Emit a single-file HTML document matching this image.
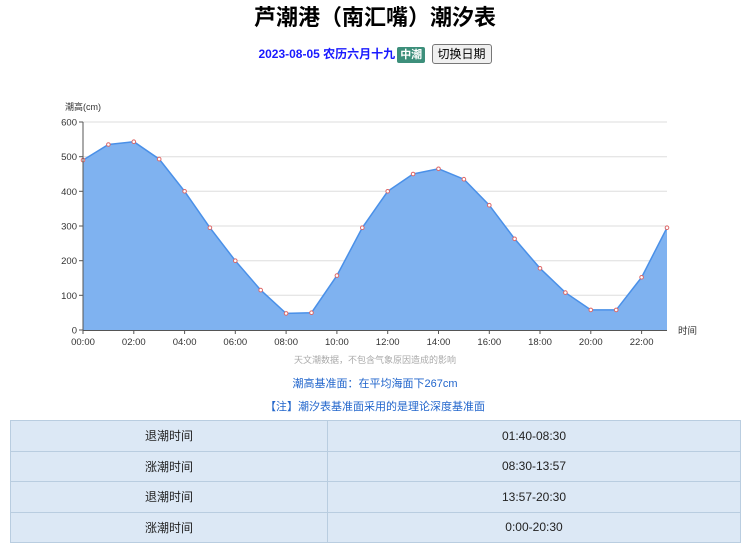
<!DOCTYPE html>
<html><head><meta charset="utf-8"><style>
body{margin:0;width:750px;height:547px;background:#fff;font-family:"Liberation Sans","Noto Sans CJK SC",sans-serif;position:relative;overflow:hidden}
h1{position:absolute;left:0;width:750px;top:4px;margin:0;text-align:center;font-size:22px;font-weight:bold;color:#000;line-height:28px}
.sub{position:absolute;left:0;width:750px;top:44px;text-align:center;font-size:12px;line-height:20px}
.sub b{color:#1a1aff}
.sub .d{color:#1a1aff;font-weight:bold}
.tag{display:inline-block;background:#3d8f7b;color:#fff;font-size:11px;padding:0 3px;line-height:16px;border-radius:2px;margin:0 3px 0 2px;font-weight:bold}
.btn{display:inline-block;border:1px solid #777;background:#f0f0f0;border-radius:3px;padding:0 5px;line-height:18px;font-size:12px;color:#000}
svg{position:absolute;left:0;top:0}
.t{position:absolute;left:0;width:750px;text-align:center;font-size:11px;color:#2266cc}
table{position:absolute;left:10px;top:420px;width:731px;border-collapse:collapse;font-size:12px;background:#dce8f5}
td{border:1px solid #b9cde0;height:29.5px;text-align:center;color:#222;padding:0}
</style></head><body>
<h1>芦潮港（南汇嘴）潮汐表</h1>
<div class="sub"><b>2023-08-05</b> <span class="d">农历六月十九</span><span class="tag">中潮</span> <span class="btn">切换日期</span></div>
<svg width="750" height="547" font-family="Liberation Sans, Noto Sans CJK SC, sans-serif">
<g stroke="#ddd" stroke-width="1">
<line x1="83" y1="122" x2="667" y2="122"/><line x1="83" y1="156.7" x2="667" y2="156.7"/><line x1="83" y1="191.3" x2="667" y2="191.3"/><line x1="83" y1="226" x2="667" y2="226"/><line x1="83" y1="260.7" x2="667" y2="260.7"/><line x1="83" y1="295.3" x2="667" y2="295.3"/>
</g>
<polygon fill="#7fb2f0" points="83,330 83,160.1 108.4,144.5 133.8,141.7 159.2,159.1 184.6,191.3 209.9,227.7 235.3,260.7 260.7,290.1 286.1,313.4 311.5,312.7 336.9,275.6 362.3,227.7 387.7,191.3 413.1,174 438.5,168.8 463.9,179.2 489.3,205.2 514.6,238.8 540,268.3 565.4,292.6 590.8,309.9 616.2,309.9 641.6,277.3 667,227.7 667,330"/>
<polyline fill="none" stroke="#4a90e8" stroke-width="1.5" points="83,160.1 108.4,144.5 133.8,141.7 159.2,159.1 184.6,191.3 209.9,227.7 235.3,260.7 260.7,290.1 286.1,313.4 311.5,312.7 336.9,275.6 362.3,227.7 387.7,191.3 413.1,174 438.5,168.8 463.9,179.2 489.3,205.2 514.6,238.8 540,268.3 565.4,292.6 590.8,309.9 616.2,309.9 641.6,277.3 667,227.7"/>
<g fill="#fff" stroke="#d66" stroke-width="1">
<circle cx="83" cy="160.1" r="1.8"/><circle cx="108.4" cy="144.5" r="1.8"/><circle cx="133.8" cy="141.7" r="1.8"/><circle cx="159.2" cy="159.1" r="1.8"/><circle cx="184.6" cy="191.3" r="1.8"/><circle cx="209.9" cy="227.7" r="1.8"/><circle cx="235.3" cy="260.7" r="1.8"/><circle cx="260.7" cy="290.1" r="1.8"/><circle cx="286.1" cy="313.4" r="1.8"/><circle cx="311.5" cy="312.7" r="1.8"/><circle cx="336.9" cy="275.6" r="1.8"/><circle cx="362.3" cy="227.7" r="1.8"/><circle cx="387.7" cy="191.3" r="1.8"/><circle cx="413.1" cy="174" r="1.8"/><circle cx="438.5" cy="168.8" r="1.8"/><circle cx="463.9" cy="179.2" r="1.8"/><circle cx="489.3" cy="205.2" r="1.8"/><circle cx="514.6" cy="238.8" r="1.8"/><circle cx="540" cy="268.3" r="1.8"/><circle cx="565.4" cy="292.6" r="1.8"/><circle cx="590.8" cy="309.9" r="1.8"/><circle cx="616.2" cy="309.9" r="1.8"/><circle cx="641.6" cy="277.3" r="1.8"/><circle cx="667" cy="227.7" r="1.8"/>
</g>
<g stroke="#555" stroke-width="1">
<line x1="83" y1="122" x2="83" y2="330"/><line x1="83" y1="330.5" x2="667" y2="330.5"/>
<line x1="79" y1="122" x2="83" y2="122"/><line x1="79" y1="156.7" x2="83" y2="156.7"/><line x1="79" y1="191.3" x2="83" y2="191.3"/><line x1="79" y1="226" x2="83" y2="226"/><line x1="79" y1="260.7" x2="83" y2="260.7"/><line x1="79" y1="295.3" x2="83" y2="295.3"/><line x1="79" y1="330" x2="83" y2="330"/>
<line x1="83" y1="330" x2="83" y2="334"/><line x1="133.8" y1="330" x2="133.8" y2="334"/><line x1="184.6" y1="330" x2="184.6" y2="334"/><line x1="235.3" y1="330" x2="235.3" y2="334"/><line x1="286.1" y1="330" x2="286.1" y2="334"/><line x1="336.9" y1="330" x2="336.9" y2="334"/><line x1="387.7" y1="330" x2="387.7" y2="334"/><line x1="438.5" y1="330" x2="438.5" y2="334"/><line x1="489.3" y1="330" x2="489.3" y2="334"/><line x1="540" y1="330" x2="540" y2="334"/><line x1="590.8" y1="330" x2="590.8" y2="334"/><line x1="641.6" y1="330" x2="641.6" y2="334"/>
</g>
<g font-size="9.5" fill="#333" text-anchor="end">
<text x="77" y="125.5">600</text><text x="77" y="160">500</text><text x="77" y="195">400</text><text x="77" y="229.5">300</text><text x="77" y="264">200</text><text x="77" y="299">100</text><text x="77" y="333.5">0</text>
</g>
<g font-size="9.5" fill="#333" text-anchor="middle">
<text x="83" y="345">00:00</text><text x="133.8" y="345">02:00</text><text x="184.6" y="345">04:00</text><text x="235.3" y="345">06:00</text><text x="286.1" y="345">08:00</text><text x="336.9" y="345">10:00</text><text x="387.7" y="345">12:00</text><text x="438.5" y="345">14:00</text><text x="489.3" y="345">16:00</text><text x="540" y="345">18:00</text><text x="590.8" y="345">20:00</text><text x="641.6" y="345">22:00</text>
</g>
<text x="65" y="110" font-size="9" fill="#333">潮高(cm)</text>
<text x="678" y="334" font-size="9.5" fill="#333">时间</text>
<text x="375" y="363" font-size="9" fill="#aaa" text-anchor="middle">天文潮数据，不包含气象原因造成的影响</text>
</svg>
<div class="t" style="top:375px">潮高基准面：在平均海面下267cm</div>
<div class="t" style="top:398px">【注】潮汐表基准面采用的是理论深度基准面</div>
<table>
<tr><td style="width:316px">退潮时间</td><td>01:40-08:30</td></tr>
<tr><td>涨潮时间</td><td>08:30-13:57</td></tr>
<tr><td>退潮时间</td><td>13:57-20:30</td></tr>
<tr><td>涨潮时间</td><td>0:00-20:30</td></tr>
</table>
</body></html>
